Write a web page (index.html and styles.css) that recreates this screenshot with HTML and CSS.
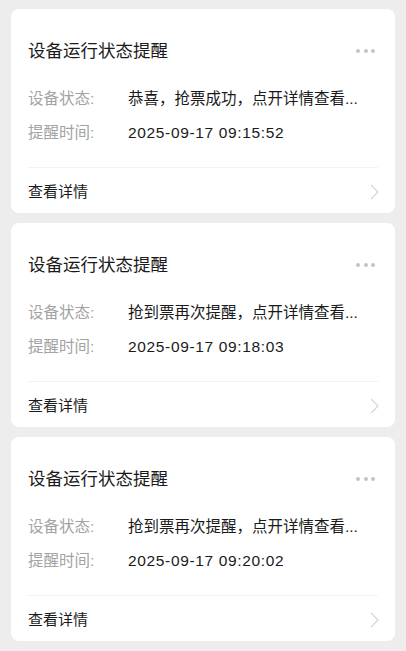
FILE: index.html
```html
<!DOCTYPE html>
<html lang="zh-CN">
<head>
  <meta charset="UTF-8">
  <meta name="viewport" content="width=device-width, initial-scale=1.0">
  <title>设备运行状态提醒</title>
  <link rel="stylesheet" href="styles.css">
</head>
<body>
  <div class="list">
    <!-- 提醒卡片 1 -->
    <div class="card">
      <div class="card-head">
        <h2>设备运行状态提醒</h2>
        <span class="more"><i></i><i></i><i></i></span>
      </div>
      <div class="rows">
        <div class="row">
          <span class="label">设备状态:</span>
          <span class="value">恭喜，抢票成功，点开详情查看...</span>
        </div>
        <div class="row">
          <span class="label">提醒时间:</span>
          <span class="value num">2025-09-17 09:15:52</span>
        </div>
      </div>
      <div class="card-foot">
        <span>查看详情</span>
        <svg class="arrow" width="9" height="16" viewBox="0 0 9 16"><path d="M1 1l7 7-7 7" fill="none" stroke="#d6d6d6" stroke-width="1.3"/></svg>
      </div>
    </div>

    <!-- 提醒卡片 2 -->
    <div class="card">
      <div class="card-head">
        <h2>设备运行状态提醒</h2>
        <span class="more"><i></i><i></i><i></i></span>
      </div>
      <div class="rows">
        <div class="row">
          <span class="label">设备状态:</span>
          <span class="value">抢到票再次提醒，点开详情查看...</span>
        </div>
        <div class="row">
          <span class="label">提醒时间:</span>
          <span class="value num">2025-09-17 09:18:03</span>
        </div>
      </div>
      <div class="card-foot">
        <span>查看详情</span>
        <svg class="arrow" width="9" height="16" viewBox="0 0 9 16"><path d="M1 1l7 7-7 7" fill="none" stroke="#d6d6d6" stroke-width="1.3"/></svg>
      </div>
    </div>

    <!-- 提醒卡片 3 -->
    <div class="card">
      <div class="card-head">
        <h2>设备运行状态提醒</h2>
        <span class="more"><i></i><i></i><i></i></span>
      </div>
      <div class="rows">
        <div class="row">
          <span class="label">设备状态:</span>
          <span class="value">抢到票再次提醒，点开详情查看...</span>
        </div>
        <div class="row">
          <span class="label">提醒时间:</span>
          <span class="value num">2025-09-17 09:20:02</span>
        </div>
      </div>
      <div class="card-foot">
        <span>查看详情</span>
        <svg class="arrow" width="9" height="16" viewBox="0 0 9 16"><path d="M1 1l7 7-7 7" fill="none" stroke="#d6d6d6" stroke-width="1.3"/></svg>
      </div>
    </div>
  </div>
</body>
</html>
```

FILE: styles.css
```css
body {
  font-family: "Liberation Sans", "Noto Sans CJK SC", sans-serif;
  background: #ededed;
  color: #1a1a1a;
  margin: 0;
  padding: 9px 11px;
}

.list {
  display: flex;
  flex-direction: column;
  gap: 10px;
}

.card {
  background: #fff;
  border-radius: 8px;
  padding: 0 17px;
}

.card-head {
  display: flex;
  align-items: center;
  justify-content: space-between;
  padding-top: 30px;
  height: 24px;
  margin-bottom: 25px;
}

.card-head h2 {
  margin: 0;
  font-size: 17.5px;
  font-weight: normal;
  line-height: 24px;
}

.more {
  display: flex;
  gap: 3.5px;
  margin-right: 3px;
}

.more i {
  width: 4px;
  height: 4px;
  border-radius: 50%;
  background: #c4c4c4;
}

.rows {
  display: flex;
  flex-direction: column;
  gap: 12px;
  margin-bottom: 23px;
}

.row {
  display: flex;
  font-size: 15.5px;
  line-height: 22px;
}

.label {
  width: 100px;
  flex-shrink: 0;
  color: #a3a3a3;
}

.value {
  white-space: nowrap;
}

.num {
  letter-spacing: 0.65px;
}

.card-foot {
  display: flex;
  align-items: center;
  justify-content: space-between;
  height: 45px;
  border-top: 1px solid #f3f3f3;
  font-size: 15px;
}

.arrow {
  margin-top: 2px;
  margin-right: -1px;
}
```
